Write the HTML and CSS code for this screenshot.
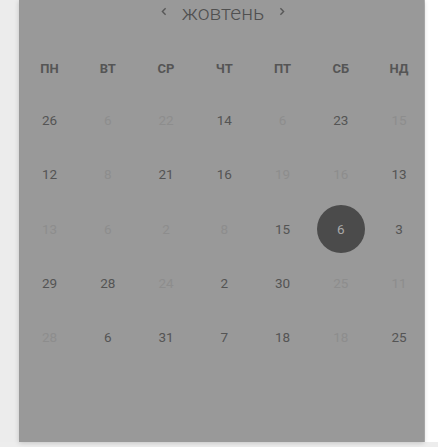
FILE: index.html
```html
<!DOCTYPE html>
<html lang="uk">
<head>
<meta charset="utf-8">
<link rel="stylesheet" href="styles.css">
</head>
<body>
<div class="stage">
  <div class="gutter"></div>
  <section class="panel">
    <header class="title">
      <button class="nav" aria-label="prev"><svg width="6" height="9" viewBox="0 0 6 9"><polyline points="4.6,1.2 1.4,4.5 4.6,7.8" fill="none" stroke="#585858" stroke-width="1.4"/></svg></button>
      <span class="month">жовтень</span>
      <button class="nav" aria-label="next"><svg width="6" height="9" viewBox="0 0 6 9"><polyline points="1.4,1.2 4.6,4.5 1.4,7.8" fill="none" stroke="#585858" stroke-width="1.4"/></svg></button>
    </header>
    <div class="grid">
      <div class="wd">ПН</div><div class="wd">ВТ</div><div class="wd">СР</div><div class="wd">ЧТ</div><div class="wd">ПТ</div><div class="wd">СБ</div><div class="wd">НД</div>

      <div class="d">26</div><div class="d f">6</div><div class="d f">22</div><div class="d">14</div><div class="d f">6</div><div class="d">23</div><div class="d f">15</div>
      <div class="d">12</div><div class="d f">8</div><div class="d">21</div><div class="d">16</div><div class="d f">19</div><div class="d f">16</div><div class="d">13</div>
      <div class="d f">13</div><div class="d f">6</div><div class="d f">2</div><div class="d f">8</div><div class="d">15</div><div class="d sel"><span>6</span></div><div class="d">3</div>
      <div class="d">29</div><div class="d">28</div><div class="d f">24</div><div class="d">2</div><div class="d">30</div><div class="d f">25</div><div class="d f">11</div>
      <div class="d f">28</div><div class="d">6</div><div class="d">31</div><div class="d">7</div><div class="d">18</div><div class="d f">18</div><div class="d">25</div>
    </div>
  </section>
  <div class="side"></div>
</div>
</body>
</html>
```

FILE: styles.css
```css
html, body {
  margin: 0;
  padding: 0;
}
body {
  width: 438px;
  height: 447px;
  overflow: hidden;
  background: #ededed;
  font-family: Roboto, "Noto Sans", sans-serif;
}
.stage {
  display: flex;
  height: 442px;
}
.gutter {
  width: 19px;
  flex: none;
  background: #ececec;
}
.panel {
  width: 405px;
  flex: none;
  background: #999999;
  box-shadow: 0 1px 5px rgba(0,0,0,0.18);
  position: relative;
  z-index: 1;
}
.side {
  flex: 1;
  background: #ffffff;
  border-left: 1px solid #b4b4b4;
}
.title {
  height: 28px;
  display: flex;
  align-items: center;
  justify-content: center;
  padding-left: 3px;
}
.nav {
  border: 0;
  background: none;
  padding: 0;
  width: 18px;
  height: 18px;
  display: flex;
  align-items: center;
  justify-content: center;
  margin: 0 9px;
  position: relative;
  top: -3px;
}
.month {
  font-size: 21px;
  font-weight: 300;
  color: #505050;
  line-height: 28px;
  position: relative;
  top: -1px;
}
.grid {
  display: grid;
  grid-template-columns: repeat(7, 58.25px);
  grid-template-rows: 49px;
  grid-auto-rows: 54.25px;
  margin: 16px 0 0 1.4px;
}
.wd {
  display: flex;
  align-items: center;
  justify-content: center;
  font-size: 13px;
  font-weight: 700;
  color: #555555;
}
.d {
  display: flex;
  align-items: center;
  justify-content: center;
  font-size: 13.5px;
  color: #545454;
}
.d.f {
  color: #8d8d8d;
}
.d.sel span {
  width: 48px;
  height: 48px;
  border-radius: 50%;
  background: #4b4b4b;
  color: #a9a9a9;
  display: flex;
  align-items: center;
  justify-content: center;
}
```
